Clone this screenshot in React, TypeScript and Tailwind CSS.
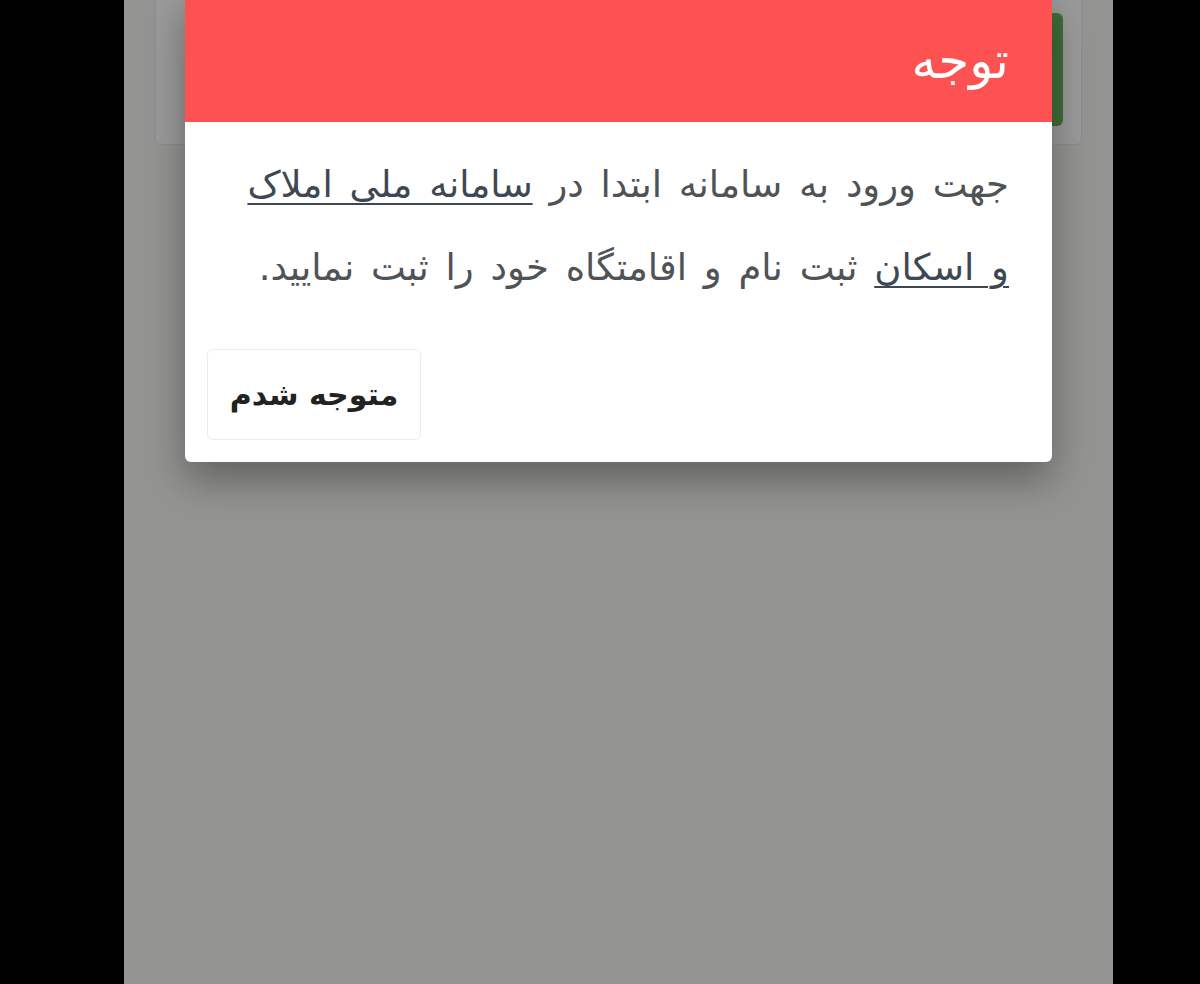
import React from 'react';

export default function App() {
    return (
        <div className="flex h-[984px] w-full bg-black overflow-hidden" style={{ fontFamily: '"DejaVu Sans", sans-serif' }}>
            {/* left letterbox */}
            <div className="w-[124px] shrink-0 bg-black" />

            {/* phone screen */}
            <div className="relative w-[989px] shrink-0 bg-[#949492] overflow-hidden">
                {/* page behind the overlay */}
                <div className="px-[31px]">
                    <div className="-mt-4 h-[161px] rounded-md border border-[#8e8e8e] bg-[#9b9b9b] flex justify-end items-start pt-7 pr-[18px]">
                        <div className="w-[40px] h-[113px] rounded-md bg-[#3f6e3a]" />
                    </div>
                </div>

                {/* dialog */}
                <div className="absolute inset-x-0 top-0 px-[61px]">
                    <div dir="rtl" className="-mt-2 rounded-md bg-white overflow-hidden shadow-[0_18px_40px_rgba(0,0,0,0.35)]">
                        <div className="h-[130px] pt-2 bg-[#fe5252] flex items-center px-[43px]">
                            <h2 className="text-[50px] text-white leading-none">توجه</h2>
                        </div>
                        <div className="pt-[21px] pr-[43px] pl-[22px] pb-[22px]">
                            <p className="pl-[30px] text-[37px] leading-[83px] [word-spacing:5px] text-[#505356]">
                                جهت ورود به سامانه ابتدا در{' '}
                                <a href="#" className="underline decoration-2 underline-offset-[6px] text-[#3e4852]">سامانه ملی املاک و&nbsp;اسکان</a>{' '}
                                ثبت نام و اقامتگاه خود را ثبت نمایید.
                            </p>
                            <div className="mt-[40px] flex justify-end">
                                <button className="w-[214px] h-[91px] rounded-md border border-[#ececec] bg-white text-[30px] font-bold text-[#222]">
                                    متوجه شدم
                                </button>
                            </div>
                        </div>
                    </div>
                </div>
            </div>

            {/* right letterbox */}
            <div className="flex-1 bg-black" />
        </div>
    );
}
